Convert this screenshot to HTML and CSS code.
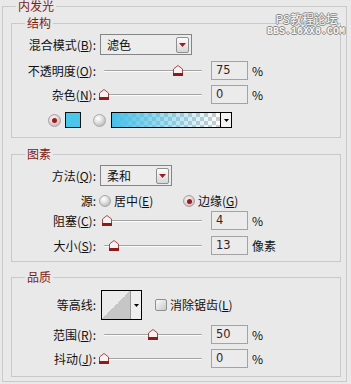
FILE: index.html
```html
<!DOCTYPE html>
<html lang="zh-CN">
<head>
<meta charset="utf-8">
<title>内发光</title>
<link rel="stylesheet" href="styles.css">
</head>
<body>
<fieldset class="outer">
  <legend class="ttl ttl-outer">内发光</legend>
  <div class="wm"><div class="wm1">PS教程论坛</div><div class="wm2">BBS.16XX8.COM</div></div>

  <fieldset class="grp g1">
    <legend class="ttl">结构</legend>
    <div class="row h21">
      <span class="lbl">混合模式(<u>B</u>):</span>
      <div class="select w92"><span class="val">滤色</span><span class="dd"><svg width="7" height="4" viewBox="0 0 7 4"><path d="M0 0H7L3.5 4Z" fill="#a3162b"/></svg></span></div>
    </div>
    <div class="row h19 mt6">
      <span class="lbl">不透明度(<u>O</u>):</span>
      <div class="slider"><div class="track"></div><svg class="thumb" style="left:73px" width="10" height="11" viewBox="0 0 10 11"><path d="M5 .5 9.5 4V8.5H.5V4Z" fill="#f7f1f1" stroke="#a54848"/><rect y="8" width="10" height="3" fill="#8c1c1c"/></svg></div>
      <div class="num">75</div><span class="unit">%</span>
    </div>
    <div class="row h19 mt5">
      <span class="lbl">杂色(<u>N</u>):</span>
      <div class="slider"><div class="track"></div><svg class="thumb" style="left:-1px" width="10" height="11" viewBox="0 0 10 11"><path d="M5 .5 9.5 4V8.5H.5V4Z" fill="#f7f1f1" stroke="#a54848"/><rect y="8" width="10" height="3" fill="#8c1c1c"/></svg></div>
      <div class="num">0</div><span class="unit">%</span>
    </div>
    <div class="row h16 mt8 colorrow">
      <span class="radio on"></span>
      <span class="swatch"></span>
      <span class="radio r2"></span>
      <div class="gradbox"><span class="grad"></span><span class="garrow"><svg width="5" height="3" viewBox="0 0 5 3"><path d="M0 0H5L2.5 3Z" fill="#000"/></svg></span></div>
    </div>
  </fieldset>

  <fieldset class="grp g2">
    <legend class="ttl">图素</legend>
    <div class="row h21">
      <span class="lbl">方法(<u>Q</u>):</span>
      <div class="select w72"><span class="val">柔和</span><span class="dd"><svg width="7" height="4" viewBox="0 0 7 4"><path d="M0 0H7L3.5 4Z" fill="#a3162b"/></svg></span></div>
    </div>
    <div class="row h16 mt7">
      <span class="lbl">源:</span>
      <div class="opt opt1"><span class="radio sm"></span><span class="otext">居中(<u>E</u>)</span></div>
      <div class="opt"><span class="radio sm on"></span><span class="otext">边缘(<u>G</u>)</span></div>
    </div>
    <div class="row h19 mt2">
      <span class="lbl">阻塞(<u>C</u>):</span>
      <div class="slider"><div class="track"></div><svg class="thumb" style="left:2px" width="10" height="11" viewBox="0 0 10 11"><path d="M5 .5 9.5 4V8.5H.5V4Z" fill="#f7f1f1" stroke="#a54848"/><rect y="8" width="10" height="3" fill="#8c1c1c"/></svg></div>
      <div class="num">4</div><span class="unit">%</span>
    </div>
    <div class="row h19 mt6">
      <span class="lbl">大小(<u>S</u>):</span>
      <div class="slider"><div class="track"></div><svg class="thumb" style="left:9px" width="10" height="11" viewBox="0 0 10 11"><path d="M5 .5 9.5 4V8.5H.5V4Z" fill="#f7f1f1" stroke="#a54848"/><rect y="8" width="10" height="3" fill="#8c1c1c"/></svg></div>
      <div class="num">13</div><span class="unit">像素</span>
    </div>
  </fieldset>

  <fieldset class="grp g3">
    <legend class="ttl">品质</legend>
    <div class="row h30">
      <span class="lbl">等高线:</span>
      <div class="contour"><span class="curve"></span><span class="carrow"><svg width="5" height="3" viewBox="0 0 5 3"><path d="M0 0H5L2.5 3Z" fill="#000"/></svg></span></div>
      <span class="check"></span><span class="ctext">消除锯齿(<u>L</u>)</span>
    </div>
    <div class="row h19 mt5">
      <span class="lbl">范围(<u>R</u>):</span>
      <div class="slider"><div class="track"></div><svg class="thumb" style="left:48px" width="10" height="11" viewBox="0 0 10 11"><path d="M5 .5 9.5 4V8.5H.5V4Z" fill="#f7f1f1" stroke="#a54848"/><rect y="8" width="10" height="3" fill="#8c1c1c"/></svg></div>
      <div class="num">50</div><span class="unit">%</span>
    </div>
    <div class="row h19 mt5">
      <span class="lbl">抖动(<u>J</u>):</span>
      <div class="slider"><div class="track"></div><svg class="thumb" style="left:-1px" width="10" height="11" viewBox="0 0 10 11"><path d="M5 .5 9.5 4V8.5H.5V4Z" fill="#f7f1f1" stroke="#a54848"/><rect y="8" width="10" height="3" fill="#8c1c1c"/></svg></div>
      <div class="num">0</div><span class="unit">%</span>
    </div>
  </fieldset>
</fieldset>
</body>
</html>
```
FILE: styles.css
```css
html, body {
  margin: 0;
  padding: 0;
  background: #e9e9e9;
}
body {
  font-family: "Noto Sans CJK SC", "Liberation Sans", sans-serif;
  font-size: 12px;
  color: #111;
  width: 351px;
  height: 384px;
  overflow: hidden;
}
fieldset {
  margin: 0;
  padding: 0;
  border: 1px solid #c9c9c9;
  min-width: 0;
}
legend.ttl {
  padding: 0 2px;
  margin-left: 13px;
  font-size: 12px;
  line-height: 12px;
  height: 12px;
  color: #7e1a1a;
}
.outer {
  position: relative;
  margin: 0 4px 0 2px;
  padding: 0 0 4px 0;
}
.ttl-outer {
  margin-left: 12px;
}
.grp {
  margin-left: 8px;
  margin-right: 5px;
}
.g1 { margin-top: 5px; padding: 5px 0 9px; }
.g2 { margin-top: 10px; padding: 5px 0 6px; }
.g3 { margin-top: 9px; padding: 7px 0 8px; }

.wm {
  position: absolute;
  right: 0;
  top: 0;
  text-align: right;
  color: #f6f6f6;
  text-shadow: 1px 0 #8a8a8a, -1px 0 #8a8a8a, 0 1px #8a8a8a, 0 -1px #8a8a8a;
}
.wm1 {
  font-size: 12px;
  line-height: 14px;
  margin-right: 8px;
}
.wm2 {
  font-family: "Liberation Mono", "DejaVu Sans Mono", monospace;
  font-weight: bold;
  font-size: 10px;
  line-height: 12px;
  margin-right: 1px;
}

.row {
  display: flex;
  align-items: center;
}
.h16 { height: 16px; }
.h19 { height: 19px; }
.h21 { height: 21px; }
.h30 { height: 30px; }
.mt2 { margin-top: 2px; }
.mt5 { margin-top: 5px; }
.mt6 { margin-top: 6px; }
.mt7 { margin-top: 7px; }
.mt8 { margin-top: 8px; }

.lbl {
  width: 84px;
  flex: none;
  text-align: right;
  white-space: nowrap;
  line-height: 16px;
}
u {
  text-decoration: underline;
  text-underline-offset: 1px;
}

.select {
  margin-left: 4px;
  height: 21px;
  box-sizing: border-box;
  border: 1px solid #858585;
  background: #ececec;
  display: flex;
  align-items: center;
  justify-content: space-between;
  padding: 0 2px 0 6px;
}
.w92 { width: 92px; }
.w72 { width: 72px; }
.val { line-height: 16px; }
.dd {
  width: 13px;
  height: 16px;
  box-sizing: border-box;
  border: 1px solid #8f8f8f;
  border-radius: 2px;
  background: linear-gradient(#fdfdfd, #d6d6d6);
  display: flex;
  align-items: center;
  justify-content: center;
}

.slider {
  position: relative;
  margin-left: 4px;
  width: 107px;
  height: 19px;
  flex: none;
  display: flex;
  align-items: center;
  padding-left: 4px;
  box-sizing: border-box;
}
.track {
  width: 98px;
  height: 0;
  border-top: 1px solid #a3a3a3;
  border-bottom: 1px solid #fbfbfb;
  border-radius: 1px;
}
.thumb {
  position: absolute;
  top: 4px;
}
.num {
  margin-left: 4px;
  width: 37px;
  height: 19px;
  box-sizing: border-box;
  border: 1px solid #a3a3a3;
  background: #ebebeb;
  padding-left: 4px;
  line-height: 17px;
  color: #3c1e1e;
  font-family: "DejaVu Sans", "Noto Sans CJK SC", sans-serif;
  font-size: 11.5px;
}
.unit {
  margin-left: 4px;
  line-height: 16px;
}

.colorrow {
  padding-left: 36px;
}
.radio {
  width: 13px;
  height: 13px;
  box-sizing: border-box;
  border-radius: 50%;
  border: 1px solid #a9a9a9;
  background: radial-gradient(circle at 38% 32%, #ffffff 0, #e6e6e6 35%, #b9b9b9 80%, #a8a8a8 100%);
  display: flex;
  align-items: center;
  justify-content: center;
  flex: none;
}
.radio.on {
  background: radial-gradient(circle at 40% 35%, #fbf4f4 0, #e2d7d7 45%, #b5a9a9 100%);
  border-color: #b39b9b;
}
.radio.on::after {
  content: "";
  width: 5px;
  height: 5px;
  border-radius: 50%;
  background: #9a1a1f;
}
.radio.sm {
  width: 12px;
  height: 12px;
}
.swatch {
  margin-left: 4px;
  width: 16px;
  height: 16px;
  box-sizing: border-box;
  border: 1px solid #111;
  background: #4cc5ea;
  flex: none;
}
.r2 {
  margin-left: 12px;
}
.gradbox {
  margin-left: 5px;
  width: 121px;
  height: 16px;
  box-sizing: border-box;
  border: 1px solid #000;
  display: flex;
}
.grad {
  flex: 1;
  background:
    linear-gradient(to right, #47c1ea 0%, rgba(71, 193, 234, 0.55) 45%, rgba(71, 193, 234, 0) 100%),
    conic-gradient(#cdcdcd 25%, #ffffff 0 50%, #cdcdcd 0 75%, #ffffff 0) 0 0 / 8px 8px;
}
.garrow {
  width: 10px;
  border-left: 1px solid #000;
  background: #f3f3f3;
  display: flex;
  align-items: center;
  justify-content: center;
}

.opt {
  display: flex;
  align-items: center;
}
.opt1 {
  margin-left: 3px;
  width: 84px;
}
.otext {
  margin-left: 3px;
  line-height: 16px;
}

.contour {
  margin-left: 5px;
  width: 41px;
  height: 30px;
  box-sizing: border-box;
  border: 1px solid #000;
  display: flex;
  flex: none;
}
.curve {
  flex: 1;
  background: linear-gradient(to top left, #c6c6c6 50%, #ebebeb 50%);
}
.carrow {
  width: 10px;
  border-left: 1px solid #9a9a9a;
  background: #efefef;
  display: flex;
  align-items: center;
  justify-content: center;
}
.check {
  margin-left: 13px;
  width: 12px;
  height: 12px;
  box-sizing: border-box;
  border: 1px solid #8f8f8f;
  border-radius: 2px;
  background: linear-gradient(135deg, #fbfbfb, #c9c9c9);
  flex: none;
}
.ctext {
  margin-left: 3px;
  line-height: 16px;
}
```
